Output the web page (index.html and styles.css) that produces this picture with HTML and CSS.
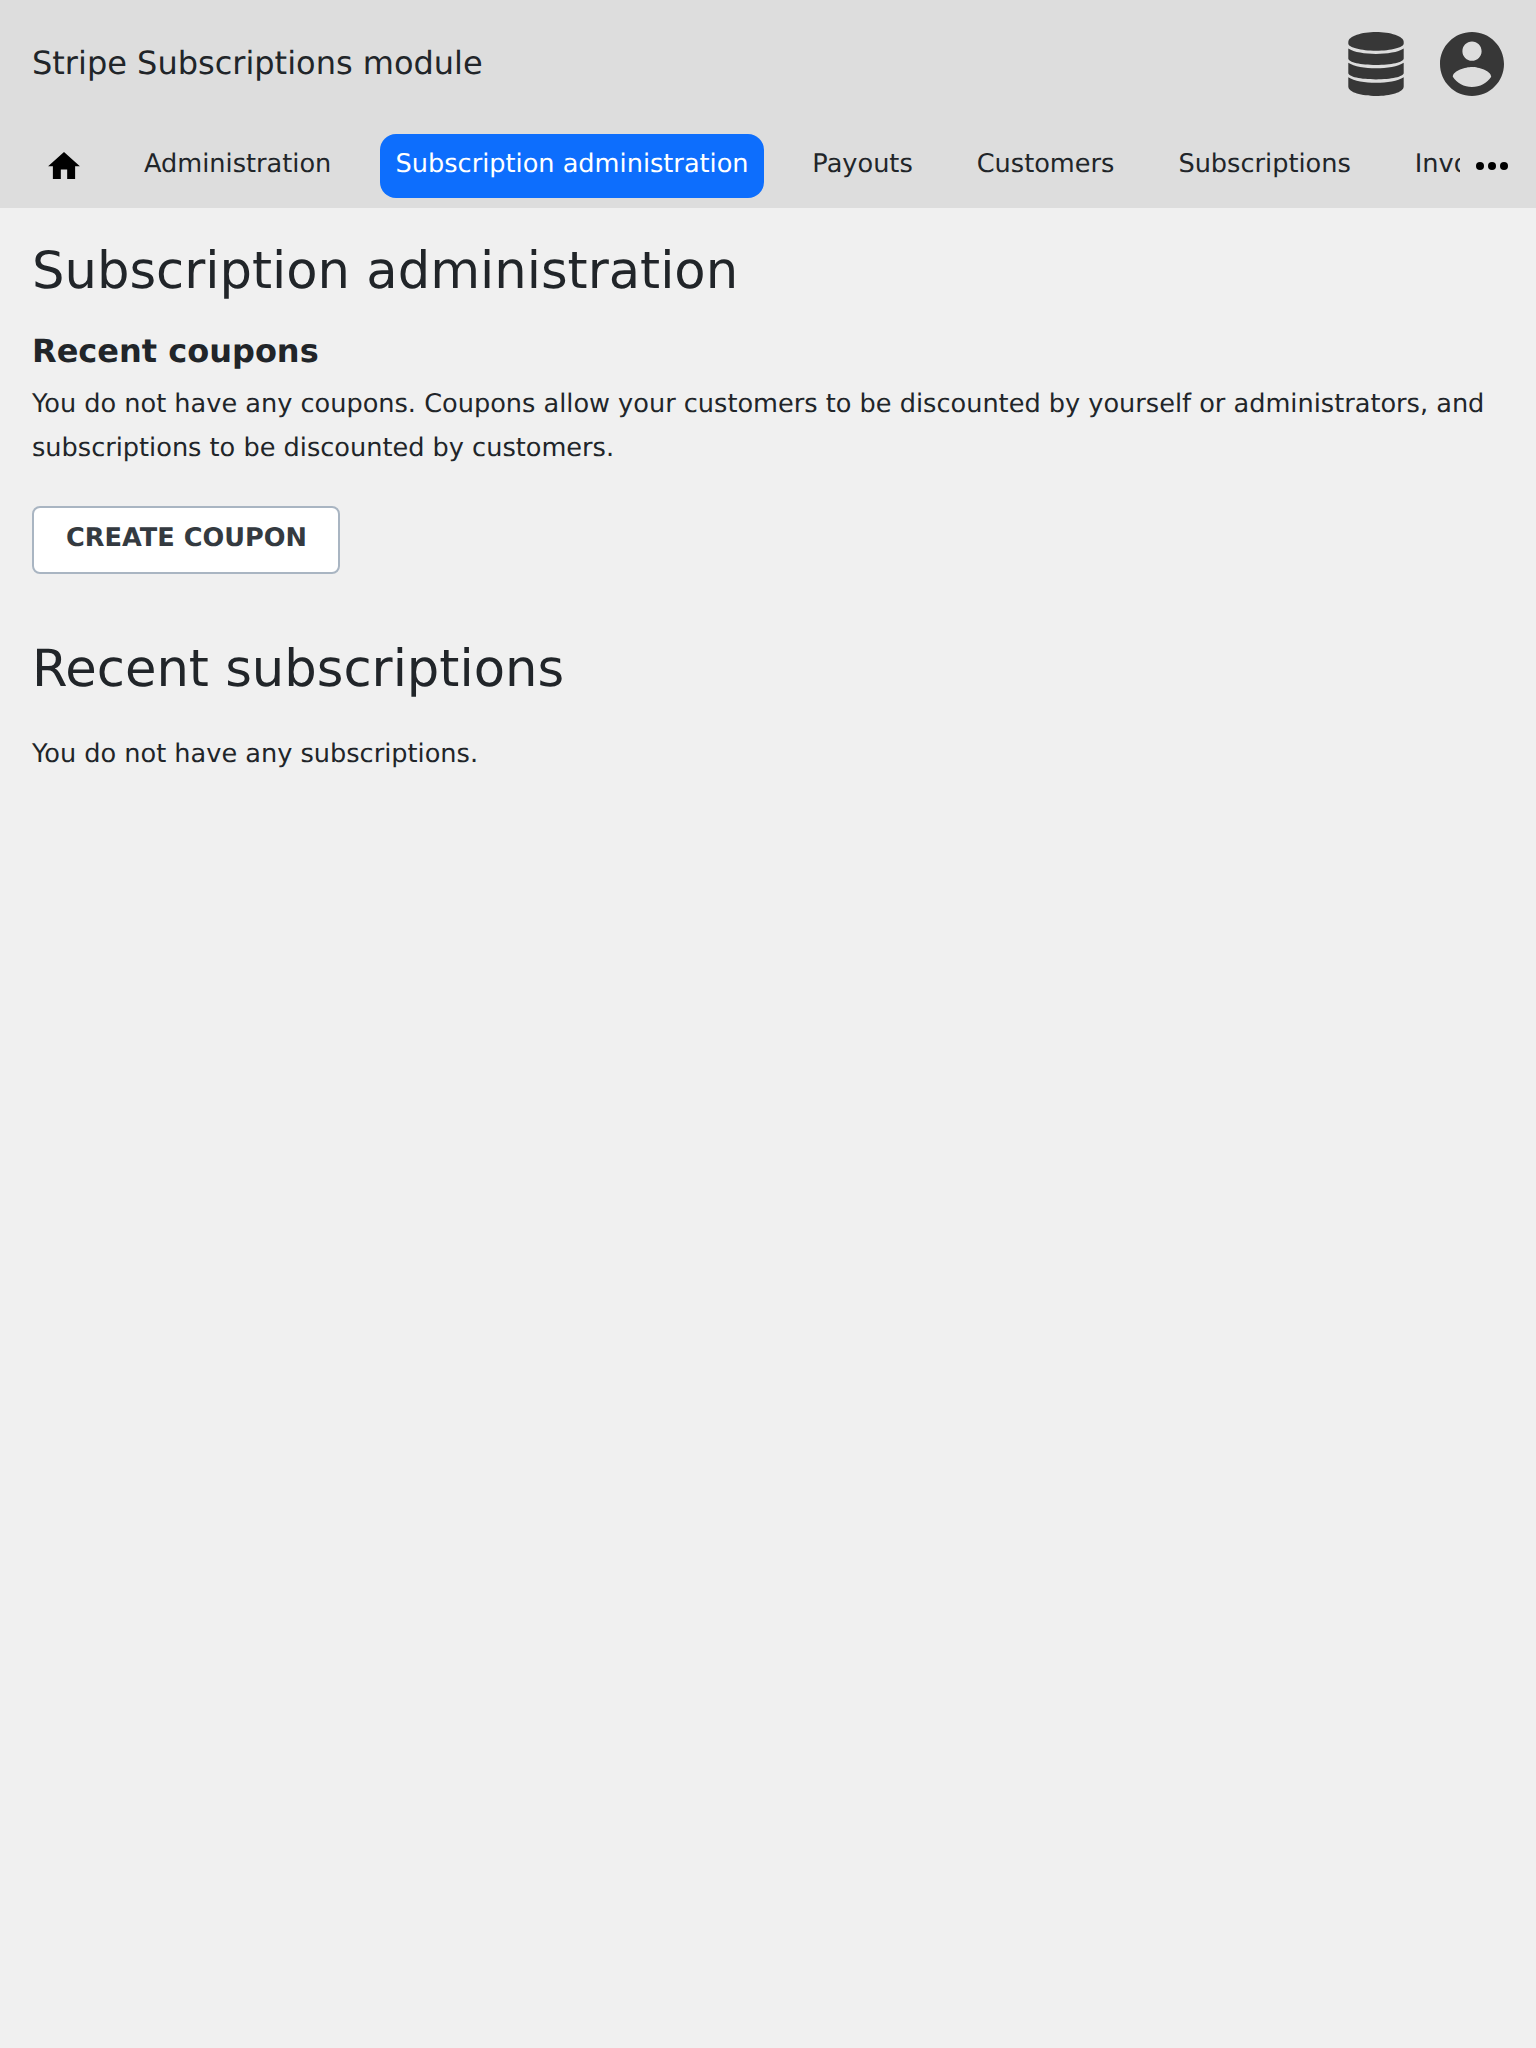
FILE: index.html
```html
<!DOCTYPE html>
<html lang="en">
<head>
<meta charset="utf-8">
<title>Subscription administration</title>
<link rel="stylesheet" href="styles.css">
</head>
<body>
<header class="header">
  <div class="topbar">
    <div class="app-title">Stripe Subscriptions module</div>
    <div class="account-icons">
      <svg class="icon-database" viewBox="0 0 56 64">
        <path d="M.3 10C.3 4 14 0 28 0s27.700 4 27.700 10v1.500C55.700 15.500 43 18.700 28 18.700S.3 15.500 .3 11.500z"/>
        <path d="M.3 16.500C6 20.300 17 21.900 28 21.900s22-1.600 27.700-5.400v10C55.700 30.200 43 33 28 33S.3 30.200 .3 26.500z"/>
        <path d="M.3 30.700C6 34.500 17 36.300 28 36.300s22-1.800 27.700-5.600v10.300C55.700 44.700 43 47.400 28 47.400S.3 44.700 .3 41z"/>
        <path d="M.3 45.200C6 49 17 50.800 28 50.800s22-1.800 27.700-5.600v9.300C55.700 60.500 42 64 28 64S.3 60.500 .3 54.500z"/>
      </svg>
      <svg class="icon-user" viewBox="2 2 20 20">
        <path d="M12 2C6.480 2 2 6.480 2 12s4.480 10 10 10 10-4.480 10-10S17.520 2 12 2zm0 3c1.660 0 3 1.340 3 3s-1.340 3-3 3-3-1.340-3-3 1.340-3 3-3zm0 14.200c-2.500 0-4.710-1.280-6-3.220.03-1.990 4-3.080 6-3.080 1.990 0 5.970 1.090 6 3.080-1.290 1.940-3.500 3.220-6 3.220z"/>
      </svg>
    </div>
  </div>
  <div class="navbar">
    <nav class="tabs">
      <a class="tab tab-home"><svg class="icon-home" viewBox="2 3 20 17"><path d="M10 20v-6h4v6h5v-8h3L12 3 2 12h3v8z"/></svg></a>
      <a class="tab">Administration</a>
      <a class="tab tab-active">Subscription administration</a>
      <a class="tab">Payouts</a>
      <a class="tab">Customers</a>
      <a class="tab">Subscriptions</a>
      <a class="tab">Invoices</a>
    </nav>
    <svg class="icon-more" viewBox="0 0 32 8"><circle cx="4" cy="4" r="4"/><circle cx="16" cy="4" r="4"/><circle cx="28" cy="4" r="4"/></svg>
  </div>
</header>
<main class="content">
  <h1 class="title">Subscription administration</h1>
  <h2 class="subtitle">Recent coupons</h2>
  <p class="text">You do not have any coupons. Coupons allow your customers to be discounted by yourself or administrators, and subscriptions to be discounted by customers.</p>
  <a class="button">CREATE COUPON</a>
  <h1 class="title title-second">Recent subscriptions</h1>
  <p class="text">You do not have any subscriptions.</p>
</main>
</body>
</html>
```
FILE: styles.css
```css
* { box-sizing: border-box; }
body {
  margin: 0;
  min-height: 2048px;
  background: #f0f0f0;
  color: #212529;
  font-family: "DejaVu Sans", sans-serif;
  font-size: 25.6px;
  line-height: 44px;
  text-rendering: geometricPrecision;
}
.header { height: 208px; background: #ddd; }
.topbar {
  display: flex;
  justify-content: space-between;
  height: 134px;
  padding: 32px 32px 0;
}
.app-title { font-size: 32px; line-height: 62px; }
.account-icons { display: flex; gap: 36px; height: 64px; fill: #373737; }
.icon-database { width: 56px; height: 64px; }
.icon-user { width: 64px; height: 64px; }
.navbar { display: flex; align-items: center; height: 64px; padding-left: 32px; }
.tabs { display: flex; gap: 32px; width: 1428px; overflow: hidden; }
.tab {
  flex: none;
  height: 64px;
  padding: 0 16px;
  border-radius: 16px;
  line-height: 60px;
  white-space: nowrap;
}
.tab-active { margin-left: 0.5px; padding: 0 15.75px; background: #0d6efd; color: #fff; }
.tab-home { display: flex; align-items: center; padding-bottom: 1px; }
.icon-home { width: 32px; height: 27px; }
.icon-more { width: 32px; height: 8px; margin-left: 16px; }
.content { padding: 32px; }
.title { margin: 0; font-size: 51.2px; font-weight: 400; line-height: 62px; }
.subtitle { margin: 30px 0 12px; font-size: 32px; font-weight: 700; line-height: 38px; }
.text { margin: 0; }
.button {
  display: block;
  width: 308px;
  height: 68px;
  margin-top: 36px;
  padding-left: 1px;
  border: 2px solid #a9b5c2;
  border-radius: 8px;
  background: #fff;
  color: #343a40;
  font-weight: 700;
  line-height: 60px;
  text-align: center;
}
.title-second { margin: 64px 0 32px; }
```
